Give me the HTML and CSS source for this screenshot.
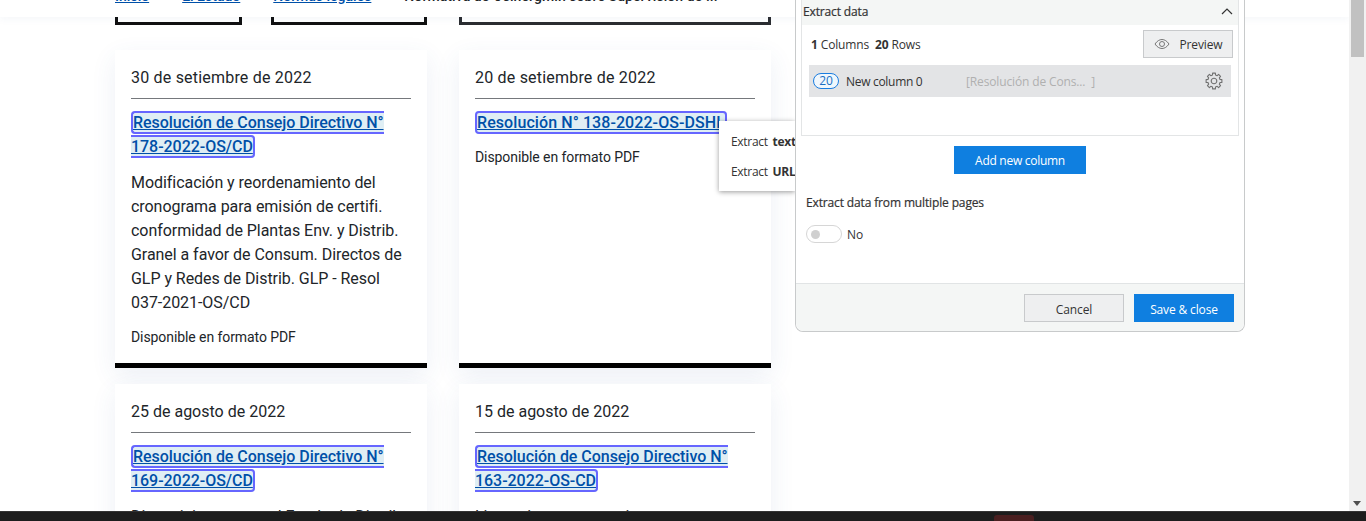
FILE: index.html
```html
<!DOCTYPE html>
<html lang="es">
<head>
<meta charset="utf-8">
<title>Normativa</title>
<link rel="stylesheet" href="styles.css">
</head>
<body>
<div class="page">
  <header class="crumbbar">
    <nav class="crumbs">
      <a href="#">Inicio</a><span class="sep">›</span><a href="#">El Estado</a><span class="sep">›</span><a href="#">Normas legales</a><span class="sep">›</span><span class="current">Normativa de Osinergmin sobre Supervisión de ...</span>
    </nav>
  </header>
  <div class="stubs">
    <div class="stub s1"></div>
    <div class="stub s2"></div>
    <div class="stub s3"></div>
  </div>
  <main class="grid">
    <article class="card tall">
      <div class="date">30 de setiembre de 2022</div>
      <h3 class="title"><a class="hl" href="#">Resolución de Consejo Directivo N° 178-2022-OS/CD</a></h3>
      <p class="desc">Modificación y reordenamiento del cronograma para emisión de certifi. conformidad de Plantas Env. y Distrib. Granel a favor de Consum. Directos de GLP y Redes de Distrib. GLP - Resol 037-2021-OS/CD</p>
      <p class="fmt">Disponible en formato PDF</p>
    </article>
    <article class="card tall">
      <div class="date">20 de setiembre de 2022</div>
      <h3 class="title wide"><a class="hl" href="#">Resolución N° 138-2022-OS-DSHL</a></h3>
      <p class="fmt">Disponible en formato PDF</p>
    </article>
    <article class="card">
      <div class="date tight">25 de agosto de 2022</div>
      <h3 class="title"><a class="hl" href="#">Resolución de Consejo Directivo N° 169-2022-OS/CD</a></h3>
      <p class="desc">Disposiciones para el Fondo de Distrib.</p>
    </article>
    <article class="card">
      <div class="date tight">15 de agosto de 2022</div>
      <h3 class="title"><a class="hl" href="#">Resolución de Consejo Directivo N° 163-2022-OS-CD</a></h3>
      <p class="desc">Lineamientos normativos</p>
    </article>
  </main>

  <div class="ctx">
    <div class="ctx-row">Extract <b>text</b></div>
    <div class="ctx-row">Extract <b>URL</b></div>
  </div>

  <aside class="panel">
    <div class="section">
      <div class="section-head">
        <span>Extract data</span>
        <svg class="chev" width="12" height="7" viewBox="0 0 12 7"><path d="M1 6l5-5 5 5" fill="none" stroke="#333" stroke-width="1.2"/></svg>
      </div>
      <div class="counts">
        <span class="counts-text"><b>1</b> Columns&nbsp; <b>20</b> Rows</span>
        <button class="btn preview">
          <svg width="16" height="12" viewBox="0 0 16 12"><path d="M1 6c2-3 4.500-4.500 7-4.500S13 3 15 6c-2 3-4.500 4.500-7 4.500S3 9 1 6z" fill="none" stroke="#777" stroke-width="1"/><circle cx="8" cy="6" r="2.500" fill="none" stroke="#777" stroke-width="1"/></svg>
          <span>Preview</span>
        </button>
      </div>
      <div class="col-row">
        <span class="badge">20</span>
        <span class="col-name">New column 0</span>
        <span class="col-sample">[Resolución de Cons...&nbsp; ]</span>
        <svg class="gear" width="18" height="18" viewBox="0 0 18 18"><g transform="translate(9 9)"><polygon points="-1.5,-6.02 -1.39,-7.88 1.39,-7.88 1.5,-6.02 3.2,-5.32 4.59,-6.555 6.555,-4.59 5.32,-3.2 6.02,-1.5 7.88,-1.39 7.88,1.39 6.02,1.5 5.32,3.2 6.555,4.59 4.59,6.555 3.2,5.32 1.5,6.02 1.39,7.88 -1.39,7.88 -1.5,6.02 -3.2,5.32 -4.59,6.555 -6.555,4.59 -5.32,3.2 -6.02,1.5 -7.88,1.39 -7.88,-1.39 -6.02,-1.5 -5.32,-3.2 -6.555,-4.59 -4.59,-6.555 -3.2,-5.32" fill="none" stroke="#707070" stroke-width="1.1" stroke-linejoin="round"/><circle r="2.800" fill="none" stroke="#707070" stroke-width="1.1"/></g></svg>
      </div>
    </div>
    <div class="add-wrap"><button class="btn primary add">Add new column</button></div>
    <div class="multi">
      <div class="multi-label">Extract data from multiple pages</div>
      <div class="toggle-row"><span class="toggle"><i></i></span><span>No</span></div>
    </div>
    <footer class="foot">
      <button class="btn cancel">Cancel</button>
      <button class="btn primary save">Save &amp; close</button>
    </footer>
  </aside>

  <div class="scrollbar">
    <div class="thumb"></div>
    <div class="arrow"></div>
  </div>
  <div class="taskbar"><span class="tab"></span></div>
</div>
</body>
</html>
```
FILE: styles.css
```css
* { box-sizing: border-box; }
html, body { margin: 0; height: 100%; overflow: hidden; background: #fff; }
.page { position: relative; width: 1366px; height: 521px; overflow: hidden; background: #fff; font-family: Roboto, "Liberation Sans", sans-serif; color: #212529; }

.crumbbar { position: absolute; top: 0; left: 0; width: 1349px; height: 17px; background: #fff; z-index: 2; box-shadow: 0 2px 8px rgba(40,70,130,.05); overflow: hidden; }
.crumbs { position: absolute; left: 115px; top: -12px; font-size: 14px; line-height: 17px; white-space: nowrap; font-weight: 500; }
.crumbs a { color: #0050a8; }
.sep { display: inline-block; width: 33px; text-align: center; color: #333; font-weight: 700; }
.current { color: #212529; letter-spacing: .08px; }

.stubs { display: flex; margin-left: 115px; height: 25px; }
.stub { height: 25px; border: 3px solid #111; border-top: 0; }
.s1 { width: 127px; margin-right: 29px; }
.s2 { width: 156px; margin-right: 32px; }
.s3 { width: 312px; border-color: #2b2d31; }

.grid { display: grid; grid-template-columns: 312px 312px; column-gap: 32px; row-gap: 16px; margin: 25px 0 0 115px; }
.card { background: #fff; padding: 16px; box-shadow: 0 8px 24px rgba(60,90,160,.09); height: 318px; overflow: hidden; }
.card.tall { border-bottom: 5px solid #000; }
.date { font-size: 16px; line-height: 24px; padding-bottom: 8px; border-bottom: 1px solid #75787c; letter-spacing: .2px; }
.date.tight { letter-spacing: 0; }
.title { margin: 12px 0 0; font-size: 16px; line-height: 24px; font-weight: 500; letter-spacing: -.04px; }
.title.wide { letter-spacing: .08px; }
.hl { color: #0050a8; text-decoration: underline; background: #dfeef4; border: 2px solid #6666ff; border-radius: 4px; padding: 0; }
.desc { margin: 12px 0 0; font-size: 16px; line-height: 24px; letter-spacing: -.05px; }
.fmt { margin: 12px 0 0; font-size: 14px; line-height: 20px; letter-spacing: -.08px; }

.ctx { position: absolute; left: 719px; top: 121px; width: 76px; height: 70px; background: #fff; z-index: 3; box-shadow: 0 1px 5px rgba(0,0,0,.4); padding-top: 6px; overflow: hidden; font-family: "Open Sans", sans-serif; font-size: 12px; color: #333; }
.ctx-row { height: 30px; line-height: 30px; padding-left: 12px; white-space: nowrap; letter-spacing: -.3px; word-spacing: 2px; }

.panel { position: absolute; left: 795px; top: 0; width: 450px; height: 332px; background: #fff; border: 1px solid #c8cacb; border-top: 0; border-radius: 0 0 8px 8px; z-index: 4; font-family: "Open Sans", sans-serif; font-size: 12px; letter-spacing: -.14px; color: #333; display: flex; flex-direction: column; }
.section { margin: 0 5px; height: 136px; border: 1px solid #e3e5e6; border-top: 0; }
.section-head { height: 25px; background: #f4f6f5; display: flex; justify-content: space-between; align-items: center; padding: 0 3px 2px 1px; -webkit-text-stroke: .2px #333; }
.chev { margin-right: 2px; }
.counts { display: flex; justify-content: space-between; align-items: flex-start; height: 40px; padding: 5px 5px 0 9px; }
.counts-text { line-height: 28px; margin-top: 1px; }
.counts b { font-weight: 700; }
.btn { font-family: inherit; font-size: 12px; letter-spacing: -.14px; border-radius: 0; }
.preview { width: 90px; height: 28px; background: #eeeff0; border: 1px solid #c8cacc; color: #333; display: flex; align-items: center; justify-content: center; gap: 10px; padding: 0; }
.col-row { margin: 0 7px; height: 32px; background: #e3e4e6; display: flex; align-items: center; padding: 0 8px 0 4px; }
.badge { width: 26px; height: 16px; border: 1px solid #1a7de0; border-radius: 8px; color: #1a6fc4; background: #f0f7fd; text-align: center; line-height: 14px; font-size: 12px; }
.col-name { margin-left: 7px; width: 120px; letter-spacing: -.3px; }
.col-sample { color: #b0b0b0; flex: 1; }
.add-wrap { display: flex; justify-content: center; margin-top: 10px; }
.primary { background: #0f7fe0; border: 0; color: #fff; }
.add { width: 132px; height: 28px; letter-spacing: -.28px; }
.multi { padding: 0 10px; margin-top: 19px; flex: 1; }
.multi-label { line-height: 20px; -webkit-text-stroke: .2px #333; }
.toggle-row { display: flex; align-items: center; gap: 5px; margin-top: 12px; }
.toggle { width: 36px; height: 18px; border: 1px solid #d6d6d6; border-radius: 9px; display: flex; align-items: center; padding-left: 4px; }
.toggle i { width: 9px; height: 9px; border-radius: 50%; background: #d0d0d0; }
.foot { height: 48px; background: #f4f6f5; border-top: 1px solid #e1e4e5; border-radius: 0 0 8px 8px; display: flex; justify-content: flex-end; align-items: flex-start; gap: 10px; padding: 10px 10px 0; }
.cancel { width: 100px; height: 28px; background: #eeeff0; border: 1px solid #c8cacc; color: #333; padding-top: 3px; }
.save { width: 100px; height: 28px; padding-top: 3px; }

.scrollbar { position: absolute; top: 0; right: 0; width: 17px; height: 511px; background: #f1f1f1; z-index: 5; }
.thumb { width: 13px; height: 57px; margin-left: 2px; background: #c1c1c1; }
.arrow { position: absolute; bottom: 5px; left: 4px; border: 4px solid transparent; border-top: 5px solid #505050; border-bottom: 0; }
.taskbar { position: absolute; left: 0; right: 0; bottom: 0; height: 10px; background: #1d1d1d; border-top: 1px solid #333; z-index: 6; }
.tab { position: absolute; left: 994px; top: 3px; width: 40px; height: 8px; background: #4a1f20; border-radius: 3px 3px 0 0; }
```
